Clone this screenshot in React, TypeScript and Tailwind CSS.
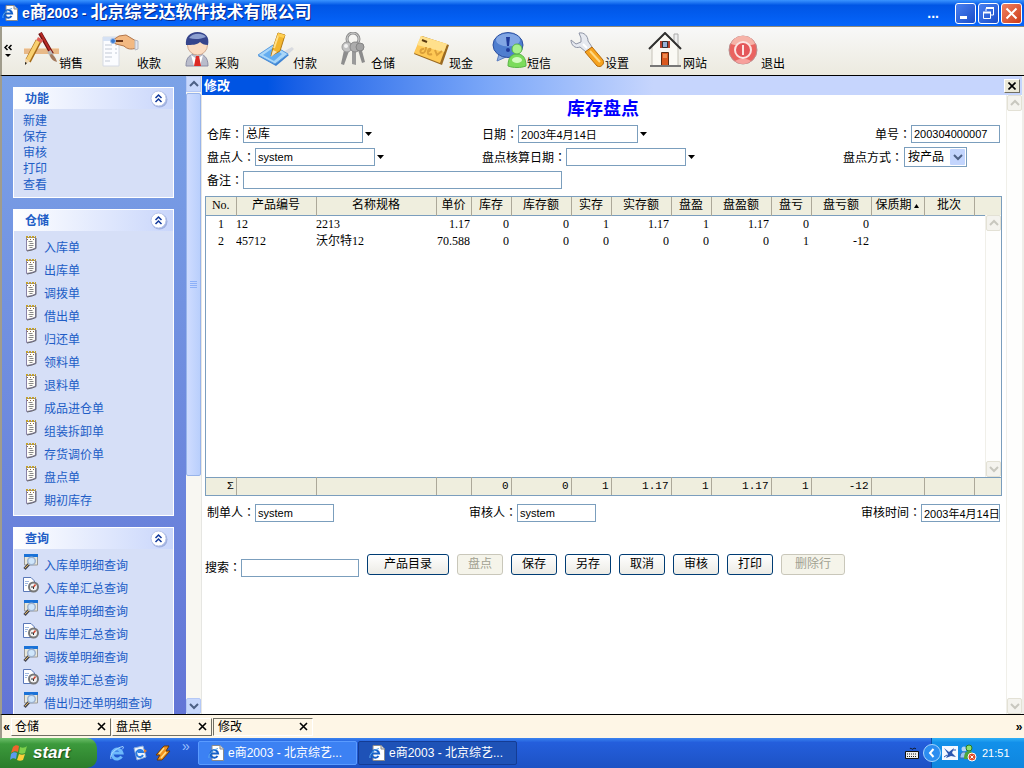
import type { ReactNode } from "react";

// ── data ────────────────────────────────────────────────────────
const functionLinks = ["新建", "保存", "审核", "打印", "查看"];

const storageLinks = [
  "入库单",
  "出库单",
  "调拨单",
  "借出单",
  "归还单",
  "领料单",
  "退料单",
  "成品进仓单",
  "组装拆卸单",
  "存货调价单",
  "盘点单",
  "期初库存",
];

const queryLinks = [
  "入库单明细查询",
  "入库单汇总查询",
  "出库单明细查询",
  "出库单汇总查询",
  "调拨单明细查询",
  "调拨单汇总查询",
  "借出归还单明细查询",
];

const columns = [
  { title: "No.", col: "w-[30px]" },
  { title: "产品编号", col: "w-[80px]" },
  { title: "名称规格", col: "w-[120px]" },
  { title: "单价", col: "w-[35px]" },
  { title: "库存", col: "w-[40px]" },
  { title: "库存额", col: "w-[60px]" },
  { title: "实存", col: "w-[40px]" },
  { title: "实存额", col: "w-[60px]" },
  { title: "盘盈", col: "w-[40px]" },
  { title: "盘盈额", col: "w-[60px]" },
  { title: "盘亏", col: "w-[40px]" },
  { title: "盘亏额", col: "w-[60px]" },
  { title: "保质期", col: "w-[53px]", sorted: true },
  { title: "批次", col: "w-[50px]" },
  { title: "", col: "" },
];

const rows = [
  ["1", "12", "2213", "1.17", "0", "0", "1", "1.17", "1", "1.17", "0", "0", "", "", ""],
  ["2", "45712", "沃尔特12", "70.588", "0", "0", "0", "0", "0", "0", "1", "-12", "", "", ""],
];

const totals = ["Σ", "", "", "", "0", "0", "1", "1.17", "1", "1.17", "1", "-12", "", "", ""];

const actions = [
  { label: "产品目录", width: "w-[82px]" },
  { label: "盘点", width: "w-[46px]", disabled: true },
  { label: "保存", width: "w-[46px]" },
  { label: "另存", width: "w-[46px]" },
  { label: "取消", width: "w-[46px]" },
  { label: "审核", width: "w-[46px]" },
  { label: "打印", width: "w-[46px]" },
  { label: "删除行", width: "w-[64px]", disabled: true },
];

const tabs = ["仓储", "盘点单", "修改"];

// ── small icons ─────────────────────────────────────────────────
function IePageIcon() {
  return (
    <svg width="16" height="16" viewBox="0 0 16 16" className="shrink-0">
      <path d="M4 .5h8l3.500 3.500v11.500H4z" fill="#fff" stroke="#8a8a8a" />
      <path d="M12 .5V4h3.500" fill="#ddd" stroke="#8a8a8a" />
      <path d="M9.500 11a3.800 3.800 0 1 1 .6-2.500H3.500" fill="none" stroke="#1560c8" strokeWidth="2" />
      <path d="M1 13C0 10 4 5 10 3.500" fill="none" stroke="#59a9f0" />
    </svg>
  );
}

function NoteIcon() {
  return (
    <svg width="16" height="16" viewBox="0 0 16 16" className="shrink-0">
      <path d="M3.500 1.500h9V12L9 13.500l-5.500 1z" fill="#fffef8" stroke="#8a83a8" />
      <path d="M13 2v10.500L9 14l-5 1" fill="none" stroke="#66666c" />
      <path d="M3 1h10" stroke="#c2a12c" strokeWidth="2" strokeDasharray="2 1" />
      <path d="M4 3.500h8" stroke="#8a6a4a" strokeDasharray="1 2" />
      <path d="M5.500 5.500h4M6.500 7.500h4M5.500 9.500h5M6.500 11.500h3" stroke="#888" />
    </svg>
  );
}

function DetailIcon() {
  return (
    <svg width="16" height="16" viewBox="0 0 16 16" className="shrink-0">
      <path d="M1.500 1h13v10h-13z" fill="#e9e8da" stroke="#9a9a98" />
      <path d="M1 1.500h14" stroke="#1a72d8" strokeWidth="3" />
      <path d="M6 10l-4.500 5" stroke="#4a4a55" strokeWidth="3" />
      <path d="M6 10l-4 4" stroke="#e0b458" />
      <circle cx="8.500" cy="7" r="3.800" fill="#cfe6fb" stroke="#9fb2cd" strokeWidth="1.500" />
    </svg>
  );
}

function SummaryIcon() {
  return (
    <svg width="16" height="16" viewBox="0 0 16 16" className="shrink-0">
      <path d="M.5.5H8l3.500 3.500v10.500H.5z" fill="#fff" stroke="#5a78b8" />
      <path d="M2 4.500h4M2 6.500h3M2 8.500h2" stroke="#9db7e0" />
      <circle cx="10.500" cy="10" r="4.500" fill="#f3f3f3" stroke="#777" strokeWidth="2" />
      <path d="M10.500 10l2-2.500" stroke="#d0452f" strokeWidth="1.500" />
      <path d="M8 10h2.500v2" stroke="#333" fill="none" />
    </svg>
  );
}

function CollapseIcon() {
  return (
    <svg width="18" height="18" viewBox="0 0 18 18">
      <circle cx="9.500" cy="9.500" r="8" fill="#9fb0df" />
      <circle cx="8.500" cy="8.500" r="7.500" fill="#fff" stroke="#b9c6ea" />
      <path d="M5.500 8L8.500 5l3 3M5.500 12L8.500 9l3 3" fill="none" stroke="#11399c" strokeWidth="1.500" />
    </svg>
  );
}

function DownTriangle() {
  return (
    <svg width="7" height="4" viewBox="0 0 7 4">
      <path d="M0 0h7L3.500 4z" fill="#000" />
    </svg>
  );
}

function Chevron({ up = false, color }: { up?: boolean; color: string }) {
  return (
    <svg width="10" height="8" viewBox="0 0 10 8">
      <path
        d={up ? "M1 6l4-4 4 4" : "M1 2l4 4 4-4"}
        fill="none"
        stroke={color}
        strokeWidth="2"
      />
    </svg>
  );
}

// ── toolbar icons ───────────────────────────────────────────────
function SalesIcon() {
  return (
    <svg width="35" height="35" viewBox="0 0 35 35">
      <path d="M0 16h35v6H0z" fill="#e8b988" />
      <path d="M0 16.500h35" stroke="#f3d6b4" />
      <path d="M16 1l12 21" stroke="#6a1010" strokeWidth="4" />
      <path d="M16.500 1l11 20" stroke="#b82a25" strokeWidth="2" />
      <path d="M25 19l3 5" stroke="#b5b5b5" strokeWidth="4" />
      <path d="M27 22c2 0 5 4 6 8-4-1-7-4-7-7z" fill="#a3795c" />
      <path d="M14.500 9L4 29" stroke="#a56a16" strokeWidth="6" />
      <path d="M14 9L4 28" stroke="#f8d070" strokeWidth="4" />
      <path d="M12.500 8l5 3 1.500-3-5-3z" fill="#e0605a" />
      <path d="M1 26l5 3-5 4z" fill="#f2d8ae" />
      <path d="M1 30l2 1-2 2z" fill="#222" />
    </svg>
  );
}

function ReceiptIcon() {
  return (
    <svg width="37" height="35" viewBox="0 0 37 35">
      <path d="M1 5h16v29H1z" fill="#fbfcff" stroke="#d5dae4" />
      <path d="M1 5h16v4H1z" fill="#d5e1f4" />
      <path d="M3 13h7M3 17h7M3 21h7M3 25h7M3 29h5M13 13h2M13 17h2M13 21h2" stroke="#c2c9d5" />
      <path d="M11 8l6-4 7-1 10 6v7c-5 2-9 1-12-2l-8-2-3-2z" fill="#f3b982" stroke="#b3764a" />
      <path d="M13 9l8 0" stroke="#6b3518" strokeWidth="2" />
      <path d="M33 8l3 1v8l-3 1z" fill="#e3e6ef" stroke="#b5b9c4" />
      <circle cx="11" cy="9" r="2.500" fill="#3c7bd0" stroke="#9fc0ee" />
    </svg>
  );
}

function BuyerIcon() {
  return (
    <svg width="35" height="35" viewBox="0 0 35 35">
      <path d="M6 34c0-9 4-12 11-12s11 3 11 12z" fill="#b9bccb" stroke="#8b8ea5" />
      <path d="M11 23l6 4 6-4-3 11h-6z" fill="#fff" />
      <path d="M16 24h3l2 10h-7z" fill="#dc2a25" />
      <circle cx="17.500" cy="13" r="10" fill="#fbdcc2" stroke="#d0aa92" />
      <path d="M6 13C5 5 10 0 17.500 0S30 5 28 13c-4 0-6-1-8-3-3 3-8 3-14 3z" fill="#36458c" />
      <path d="M9 6c3-5 13-6 17-1-5 2-11 3-17 1z" fill="#8c9fd0" />
    </svg>
  );
}

function PayIcon() {
  return (
    <svg width="36" height="35" viewBox="0 0 36 35">
      <path d="M23 21l11-6 2 2-10 9z" fill="#d9dbe0" />
      <path d="M0 24l15-11 16 10-13 11z" fill="#3c82d2" />
      <path d="M0 23l15-10 15 9-13 10z" fill="#a9d6f8" stroke="#5a9de0" />
      <path d="M5 23l10-7 9 6-8 7z" fill="#64adf0" />
      <path d="M13 24l2-8L20 1l7 2-5 16z" fill="#f3b62e" stroke="#b47a12" />
      <path d="M20 4l-4 12" stroke="#ffe08a" strokeWidth="2" />
      <path d="M13 25l2-7 4 2z" fill="#fbe4b8" />
      <path d="M20 1l7 2-1 3-7-2z" fill="#ffcf52" />
    </svg>
  );
}

function KeysIcon() {
  return (
    <svg width="35" height="35" viewBox="0 0 35 35">
      <circle cx="17" cy="7" r="6" fill="none" stroke="#8f8f8f" strokeWidth="3" />
      <circle cx="17" cy="7" r="6" fill="none" stroke="#d0d0d0" />
      <path d="M8 18L5 32l3 1 5-14z" fill="#8d8d8d" />
      <circle cx="11" cy="15" r="5" fill="#c2c2c2" stroke="#999" />
      <path d="M16 19v13l4 1V19z" fill="#9a9a9a" />
      <circle cx="19" cy="15" r="5" fill="#acacac" stroke="#888" />
      <path d="M22 18l4 13 3-1-4-15z" fill="#8c8c8c" />
      <circle cx="24" cy="15" r="4" fill="#a2a2a2" stroke="#858585" />
      <circle cx="10" cy="14" r="2" fill="#f2f2f2" />
    </svg>
  );
}

function CashIcon() {
  return (
    <svg width="36" height="35" viewBox="0 0 36 35">
      <path d="M8 4l27 9-7 20L0 22z" fill="#9a6a22" />
      <path d="M7 4l26 8-7 19L0 21z" fill="#ffc955" />
      <path d="M7 4l26 8-3 8L3 13z" fill="#ffe08c" />
      <path d="M8 8l5 2" stroke="#5b3a10" strokeWidth="2" />
      <path
        d="M10 17c-4-1-5 5-1 4 2 0 3-4 3-6M14 20c5-3 1-5 0-1-1 4 2 4 4 3M21 18l2 5 5-4"
        fill="none"
        stroke="#dca03a"
        strokeWidth="2"
      />
    </svg>
  );
}

function MessageIcon() {
  return (
    <svg width="35" height="36" viewBox="0 0 35 36">
      <path d="M7 22l-2 7 9-4z" fill="#8fb0e4" stroke="#5a7cc0" />
      <ellipse cx="16" cy="13" rx="15" ry="12.500" fill="#4f7ecf" stroke="#2c4f9f" />
      <ellipse cx="16" cy="8" rx="12" ry="6.500" fill="#82a6e4" />
      <path d="M14 5h4l-1 9h-2z" fill="#1f3a9a" />
      <circle cx="16" cy="18" r="2" fill="#1f3a9a" />
      <path d="M16 34c0-8 3-12 9-12s9 4 9 12c-5 2-13 2-18 0z" fill="#7bdc5b" stroke="#5cb548" />
      <circle cx="25" cy="17" r="5" fill="#a8f08c" stroke="#5cb548" />
      <ellipse cx="25" cy="28" rx="5" ry="3" fill="#d2fbc0" />
    </svg>
  );
}

function SettingsIcon() {
  return (
    <svg width="36" height="36" viewBox="0 0 36 36">
      <path
        d="M9 1c5-1 9 3 9 8l4 6-6 5-6-5C5 17 1 13 1 8l5 4 5-2V6z"
        fill="#e6e9f0"
        stroke="#8e94a5"
      />
      <path d="M15 20l7-5 11 13c2 4-2 8-6 6z" fill="#f6a31f" stroke="#b56a0c" />
      <path d="M20 19l10 11" stroke="#ffd983" strokeWidth="2" />
      <path d="M13 12l4 4" stroke="#fff" strokeWidth="2" />
    </svg>
  );
}

function HomeIcon() {
  return (
    <svg width="35" height="36" viewBox="0 0 35 36">
      <path d="M26 2h4v12h-4z" fill="#eee" stroke="#aaa" />
      <path d="M4 15L17 2l13 13v19H4z" fill="#faf9f4" stroke="#c5c2b8" />
      <path d="M1 17L17 1l16 16" fill="none" stroke="#30302f" strokeWidth="2" />
      <path d="M12 9h10v7H12z" fill="#b5412c" />
      <path d="M14.500 9.500h5v6h-5z" fill="#9ab2d8" stroke="#333" />
      <path d="M13.500 20.500h7V34h-7z" fill="#d9581f" stroke="#5a2a12" />
      <path d="M15 22h4v4h-4z" fill="#ee8a4e" />
      <path d="M2 34h31" stroke="#777" strokeWidth="2" />
    </svg>
  );
}

function ExitIcon() {
  return (
    <svg width="35" height="36" viewBox="0 0 35 36">
      <circle cx="17" cy="18" r="14" fill="#ea6460" stroke="#b98f8f" />
      <path d="M5 12c4-11 20-11 24 0-6 2-18 2-24 0z" fill="#f6b3a8" />
      <path d="M9 29c5 4 11 4 16 0-5-3-11-3-16 0z" fill="#f7a09c" />
      <circle cx="17" cy="18" r="8" fill="#e4575a" stroke="#fbe4e2" strokeWidth="2" />
      <path d="M17 13v10" stroke="#fbe4e2" strokeWidth="2" />
    </svg>
  );
}

const tools = [
  { label: "销售", icon: <SalesIcon /> },
  { label: "收款", icon: <ReceiptIcon /> },
  { label: "采购", icon: <BuyerIcon /> },
  { label: "付款", icon: <PayIcon /> },
  { label: "仓储", icon: <KeysIcon /> },
  { label: "现金", icon: <CashIcon /> },
  { label: "短信", icon: <MessageIcon /> },
  { label: "设置", icon: <SettingsIcon /> },
  { label: "网站", icon: <HomeIcon /> },
  { label: "退出", icon: <ExitIcon /> },
];

// ── building blocks ─────────────────────────────────────────────
function Panel({ title, children }: { title: string; children: ReactNode }) {
  return (
    <section className="shrink-0 border border-white bg-[#d6dff7]">
      <h2 className="flex h-[21px] items-center justify-between bg-linear-to-r from-white to-[#c9d6fb] pr-[5px] pl-[11px] font-bold">
        {title}
        <button type="button" aria-label={`收起${title}`}>
          <CollapseIcon />
        </button>
      </h2>
      {children}
    </section>
  );
}

function IconLinks({ items, icon }: { items: string[]; icon: (i: number) => ReactNode }) {
  return (
    <ul className="pt-[5px] pb-[3px] pl-[9px]">
      {items.map((item, i) => (
        <li key={item} className="flex h-[23px] items-start gap-[5px]">
          {icon(i)}
          <a href="#" className="leading-[25px] whitespace-nowrap">
            {item}
          </a>
        </li>
      ))}
    </ul>
  );
}

function Field({
  id,
  label,
  value = "",
  width,
  size = "text-[11px]",
  picker = false,
}: {
  id: string;
  label: string;
  value?: string;
  width: string;
  size?: string;
  picker?: boolean;
}) {
  return (
    <div className="flex items-center">
      <label htmlFor={id} className="whitespace-nowrap">
        {label}
        <span className="font-['Noto_Sans_CJK_TC']" lang="zh-TW">
          ：
        </span>
      </label>
      <input
        id={id}
        type="text"
        defaultValue={value}
        className={`h-[18px] border border-[#7b9ebd] bg-white pl-[2px] outline-none ${width} ${size}`}
      />
      {picker && (
        <button type="button" aria-label={`选择${label}`} className="pl-[2px]">
          <DownTriangle />
        </button>
      )}
    </div>
  );
}

function GrayScrollbar() {
  return (
    <div className="flex h-full w-4 flex-col justify-between border-l border-[#f0efe9] bg-[#fefefd]">
      <button
        type="button"
        aria-label="向上滚动"
        className="flex h-4 items-center justify-center rounded-[2px] border border-[#e3e1d5] bg-[#f4f3ee]"
      >
        <Chevron up color="#c8c7bf" />
      </button>
      <button
        type="button"
        aria-label="向下滚动"
        className="flex h-4 items-center justify-center rounded-[2px] border border-[#e3e1d5] bg-[#f4f3ee]"
      >
        <Chevron color="#c8c7bf" />
      </button>
    </div>
  );
}

function cellAlign(i: number) {
  if (i === 0) return "text-center";
  if (i < 3) return "text-left";
  return i === 3 ? "pr-px text-right" : "pr-[2px] text-right";
}

// ── window parts ────────────────────────────────────────────────
function TitleBar() {
  return (
    <header className="flex h-[26px] shrink-0 items-center bg-linear-to-b from-[#3a93ff] via-[#0055e5] via-20% to-[#0665fb] pr-[2px] pl-[2px] text-white">
      <IePageIcon />
      <h1 className="ml-1 flex-1 text-[17px] leading-[26px] font-bold whitespace-nowrap [text-shadow:1px_1px_#0a2a8a]">
        <span className="text-[14px]">e</span>商<span className="text-[14px]">2003 - </span>
        北京综艺达软件技术有限公司
      </h1>
      <span className="mr-4 text-sm font-bold">...</span>
      <div className="flex gap-[2px]">
        <button
          type="button"
          aria-label="最小化"
          className="h-[21px] w-[21px] rounded-[3px] border border-white bg-linear-to-br from-[#4a80f0] to-[#1a4cc8]"
        >
          <svg width="19" height="19" viewBox="0 0 19 19">
            <path d="M4 12h7v3H4z" fill="#fff" />
          </svg>
        </button>
        <button
          type="button"
          aria-label="还原"
          className="h-[21px] w-[21px] rounded-[3px] border border-white bg-linear-to-br from-[#4a80f0] to-[#1a4cc8]"
        >
          <svg width="19" height="19" viewBox="0 0 19 19" fill="none" stroke="#fff">
            <path d="M7 7V4.500h7.500V11H12" />
            <path d="M7 4h8" strokeWidth="2" />
            <path d="M4.500 8.500h7v6h-7z" />
            <path d="M4 8.500h8" strokeWidth="2" />
          </svg>
        </button>
        <button
          type="button"
          aria-label="关闭"
          className="h-[21px] w-[21px] rounded-[3px] border border-white bg-linear-to-br from-[#f08060] to-[#cc3a14]"
        >
          <svg width="19" height="19" viewBox="0 0 19 19">
            <path d="M4.500 4.500l10 10M14.500 4.500l-10 10" stroke="#fff" strokeWidth="2" />
          </svg>
        </button>
      </div>
    </header>
  );
}

function Toolbar() {
  return (
    <nav className="flex h-[50px] shrink-0 items-center border-t border-b border-l-2 border-t-[#8d8a7c] border-b-black border-l-[#a09c8c] bg-linear-to-b from-[#f8f8f8] to-[#eceadf] pl-[2px]">
      <button type="button" aria-label="更多" className="mr-3 w-2">
        <svg width="8" height="14" viewBox="0 0 8 14">
          <path d="M3.500 1L1 3.500 3.500 6M7.500 1L5 3.500 7.500 6" fill="none" stroke="#000" strokeWidth="1.500" />
          <path d="M1 10h6l-3 3z" fill="#000" />
        </svg>
      </button>
      <ul className="flex">
        {tools.map((tool) => (
          <li key={tool.label} className="w-[78px]">
            <a href="#" className="flex h-[39px] items-start">
              <span className="w-[35px]">{tool.icon}</span>
              <span className="self-end leading-[14px] whitespace-nowrap">{tool.label}</span>
            </a>
          </li>
        ))}
      </ul>
    </nav>
  );
}

function Sidebar() {
  return (
    <aside className="flex shrink-0 overflow-hidden border-l-2 border-[#a09c8c]">
      <div className="flex w-[184px] flex-col gap-[11px] overflow-hidden bg-linear-to-b from-[#7ba2e7] to-[#6375d6] py-[11px] pr-3 pl-[11px] text-[#215dc6]">
        <Panel title="功能">
          <ul className="px-[9px] py-1">
            {functionLinks.map((item) => (
              <li key={item} className="leading-4">
                <a href="#">{item}</a>
              </li>
            ))}
          </ul>
        </Panel>
        <Panel title="仓储">
          <IconLinks items={storageLinks} icon={() => <NoteIcon />} />
        </Panel>
        <Panel title="查询">
          <IconLinks
            items={queryLinks}
            icon={(i) => (i % 2 === 0 ? <DetailIcon /> : <SummaryIcon />)}
          />
        </Panel>
      </div>
      <div className="flex w-4 flex-col border-r border-[#e6e6e2] bg-[#f8f7f2]">
        <button
          type="button"
          aria-label="向上滚动"
          className="flex h-4 shrink-0 items-center justify-center border border-[#b4c8f6] bg-[#c8d8fc]"
        >
          <Chevron up color="#4d6185" />
        </button>
        <div className="mt-px flex h-[383px] flex-col items-center justify-center gap-px rounded-[2px] border border-[#98b4ea] bg-linear-to-r from-[#cfdcff] to-[#b9cffc]">
          {[0, 1, 2, 3].map((n) => (
            <span key={n} className="h-px w-[7px] bg-[#8cb0f8]" />
          ))}
        </div>
        <button
          type="button"
          aria-label="向下滚动"
          className="mt-auto flex h-4 shrink-0 items-center justify-center rounded-[2px] border border-[#b4c8f6] bg-[#c8d8fc]"
        >
          <Chevron color="#4d6185" />
        </button>
      </div>
    </aside>
  );
}

function StockTable() {
  return (
    <div className="relative mt-[7px] -ml-[2px] h-[300px] border border-[#7b9ebd]">
      <table className="h-full w-full table-fixed border-collapse">
        <colgroup>
          {columns.map((column, i) => (
            <col key={i} className={column.col} />
          ))}
        </colgroup>
        <thead>
          <tr className="h-[18px] border-b border-[#7b9ebd] bg-[#efeede]">
            {columns.map((column, i) => (
              <th
                key={i}
                className="h-[18px] overflow-hidden border-r border-[#aca899] p-0 leading-[17px] font-normal whitespace-nowrap last:border-r-0"
              >
                {i === 0 ? (
                  <span className="font-['Liberation_Serif']">{column.title}</span>
                ) : (
                  column.title
                )}
                {column.sorted && (
                  <svg width="7" height="4" viewBox="0 0 7 4" className="ml-px inline-block align-middle">
                    <path d="M1 4h5L3.500 0z" fill="#000" />
                  </svg>
                )}
              </th>
            ))}
          </tr>
        </thead>
        <tbody className="font-['Liberation_Serif','Noto_Sans_CJK_SC',serif]">
          {rows.map((row) => (
            <tr key={row[0]} className="h-[17px]">
              {row.map((cell, i) => (
                <td
                  key={i}
                  className={`h-[17px] overflow-hidden py-0 leading-[17px] whitespace-nowrap ${cellAlign(i)}`}
                >
                  {cell}
                </td>
              ))}
            </tr>
          ))}
          <tr>
            <td colSpan={columns.length} />
          </tr>
        </tbody>
        <tfoot className="font-['Liberation_Mono','Noto_Sans_CJK_SC',monospace] text-[11px]">
          <tr className="h-[18px] border-t border-[#7b9ebd] bg-[#efeede]">
            {totals.map((cell, i) => (
              <td
                key={i}
                className="h-[18px] border-r border-[#aca899] py-0 pr-[2px] text-right leading-[17px] last:border-r-0"
              >
                {cell}
              </td>
            ))}
          </tr>
        </tfoot>
      </table>
      <div className="absolute top-[18px] right-0 bottom-[18px]">
        <GrayScrollbar />
      </div>
    </div>
  );
}

function StockForm() {
  return (
    <form className="min-w-0 flex-1 overflow-hidden pr-[4px] pl-[5px]">
      <h2 className="mb-[2px] pr-[3px] text-center text-[18px] leading-[28px] font-bold text-[#0000ff]">
        库存盘点
      </h2>

      <div className="grid auto-rows-[18px] grid-cols-[275px_1fr_157px] items-center gap-y-[5px] pr-[2px]">
        <Field id="warehouse" label="仓库" value="总库" width="w-[120px]" size="text-[12px]" picker />
        <Field id="date" label="日期" value="2003年4月14日" width="w-[120px]" picker />
        <div className="justify-self-end">
          <Field id="number" label="单号" value="200304000007" width="w-[89px]" />
        </div>
        <Field id="counter" label="盘点人" value="system" width="w-[120px]" picker />
        <Field id="account-date" label="盘点核算日期" width="w-[120px]" picker />
        <div className="flex items-center">
          <label htmlFor="mode" className="whitespace-nowrap">
            盘点方式
            <span className="font-['Noto_Sans_CJK_TC']" lang="zh-TW">
              ：
            </span>
          </label>
          <div className="relative ml-px">
            <select
              id="mode"
              className="block h-5 w-[63px] appearance-none border border-[#7b9ebd] bg-white pl-[3px] outline-none"
            >
              <option>按产品</option>
            </select>
            <span className="pointer-events-none absolute top-[2px] right-[2px] flex h-4 w-[15px] items-center justify-center rounded-[1px] bg-[#c3d5fd]">
              <Chevron color="#4d6185" />
            </span>
          </div>
        </div>
        <div className="col-span-3">
          <Field id="remark" label="备注" width="w-[319px]" />
        </div>
      </div>

      <StockTable />

      <div className="mt-[7px] grid h-[18px] grid-cols-[262px_1fr_auto] items-center pr-[2px]">
        <Field id="maker" label="制单人" value="system" width="w-[79px]" />
        <Field id="auditor" label="审核人" value="system" width="w-[79px]" />
        <Field id="audit-time" label="审核时间" value="2003年4月14日" width="w-[79px]" />
      </div>

      <div className="mt-[33px] -ml-[2px] flex items-start gap-2">
        <div className="pt-1">
          <Field id="search" label="搜索" width="w-[118px]" />
        </div>
        {actions.map((action) => (
          <button
            key={action.label}
            type="button"
            disabled={action.disabled}
            className={`h-[21px] rounded-[3px] border border-[#003c74] bg-linear-to-b from-white to-[#ecebe5] leading-[17px] disabled:border-[#c9c7ba] disabled:from-[#f5f4ea] disabled:to-[#f5f4ea] disabled:text-[#a1a192] ${action.width}`}
          >
            {action.label}
          </button>
        ))}
      </div>
    </form>
  );
}

function TabStrip() {
  return (
    <nav className="flex h-6 shrink-0 items-center border-t border-l-2 border-t-black border-l-[#a09c8c] bg-[#fef6e6]">
      <button type="button" aria-label="上一页" className="w-[9px] font-bold leading-4">
        «
      </button>
      {tabs.map((tab, i) => (
        <div
          key={tab}
          className={
            i === tabs.length - 1
              ? "mr-px flex h-[18px] w-[100px] items-center justify-between border border-t-[#716f64] border-r-white border-b-white border-l-[#716f64] pr-1 pl-1"
              : "mr-px flex h-[18px] w-[100px] items-center justify-between border border-t-white border-r-[#716f64] border-b-[#716f64] border-l-white pr-1 pl-[3px]"
          }
        >
          <a href="#" className="leading-4">
            {tab}
          </a>
          <button type="button" aria-label={`关闭${tab}`}>
            <svg width="9" height="9" viewBox="0 0 9 9">
              <path d="M1 1l7 7M8 1L1 8" stroke="#000" strokeWidth="1.600" />
            </svg>
          </button>
        </div>
      ))}
      <button type="button" aria-label="下一页" className="ml-auto w-[10px] font-bold leading-4">
        »
      </button>
    </nav>
  );
}

function Taskbar() {
  return (
    <footer className="flex h-[30px] shrink-0 items-stretch bg-linear-to-b from-[#3a83f0] via-[#245edc] via-15% to-[#1d52c4] text-white">
      <button
        type="button"
        className="flex w-[97px] items-center gap-[5px] rounded-r-[10px] bg-linear-to-b from-[#6cbf6a] via-[#3c9a3c] via-20% to-[#2b7d2b] pl-[10px] text-[17px] font-bold italic [text-shadow:1px_1px_1px_#1b4d1b]"
      >
        <svg width="18" height="18" viewBox="0 0 18 18">
          <path d="M3 3c2-2 4-2 6-1L8 8C6 7 4 7 1 9z" fill="#f0642d" />
          <path d="M10 3c2 1 5 1 7-1l-2 7c-2 1-4 1-6 0z" fill="#7ed04b" />
          <path d="M1 10c2-2 4-2 6-1l-1 6c-2-1-4-1-6 1z" fill="#5b9bf0" />
          <path d="M9 10c2 1 4 1 6 0l-2 6c-2 1-4 1-6 0z" fill="#fbcf3a" />
        </svg>
        start
      </button>

      {/* quick launch */}
      <div className="flex w-[101px] items-center gap-[7px] pl-3">
        <svg width="16" height="16" viewBox="0 0 16 16" fill="none">
          <path d="M12.500 11.500A5 5 0 1 1 13 8H4" stroke="#6db9fb" strokeWidth="3" />
          <path d="M2 14C0 10 6 3 14 1.500c1 1 0 2-1 3" stroke="#a8d6ff" />
        </svg>
        <svg width="16" height="16" viewBox="0 0 16 16">
          <path d="M2 3l9-2 3 11-9 3z" fill="#eef4fd" stroke="#8fb0dd" />
          <path d="M11 10a3.500 3.500 0 1 1 0-3H6" fill="none" stroke="#2b7de0" strokeWidth="2" />
          <path d="M12 4l3 2-3 2z" fill="#e8862f" />
        </svg>
        <svg width="16" height="16" viewBox="0 0 16 16">
          <path d="M9 1h5l-3 5h4l-8 9H2l3-5H1z" fill="#f4941d" stroke="#6b3a08" />
          <path d="M9 3L4 9M11 7l-5 6" stroke="#ffe08a" strokeWidth="1.500" />
        </svg>
        <span className="ml-1 self-start text-sm leading-4 text-[#9cc0ff]">»</span>
      </div>

      <button
        type="button"
        className="my-[3px] flex w-[159px] items-center gap-1 rounded-[2px] border border-[#5a9bff] bg-[#3c81f3] pl-[9px] leading-4"
      >
        <IePageIcon />
        e商2003 - 北京综艺...
      </button>
      <button
        type="button"
        className="my-[3px] ml-px flex w-[159px] items-center gap-1 rounded-[2px] border border-[#143c94] bg-[#1e52b7] pl-[10px] leading-4"
      >
        <IePageIcon />
        e商2003 - 北京综艺...
      </button>

      {/* tray */}
      <div className="ml-auto flex items-center">
        <svg width="14" height="14" viewBox="0 0 14 14" className="mr-3">
          <path d="M.5 5.500h13v7H.5z" fill="#eee" stroke="#111" />
          <path d="M2 8h10M2 10.500h10" stroke="#222" strokeDasharray="1 1" />
          <path d="M5 3c1-2 2 1 3 0s2-1 3 0" fill="none" stroke="#111" />
        </svg>
        <div className="flex h-full w-[93px] items-center border-l border-[#0a4fa8] bg-linear-to-b from-[#2fb0f6] via-[#1290ea] via-15% to-[#0f86de]">
          <button type="button" aria-label="显示隐藏图标" className="-ml-[9px]">
            <svg width="18" height="18" viewBox="0 0 18 18">
              <circle cx="9" cy="9" r="8.500" fill="#2b8df0" stroke="#a8d5fb" />
              <path d="M10.500 5L7 9l3.500 4" fill="none" stroke="#fff" strokeWidth="2" />
            </svg>
          </button>
          <svg width="16" height="16" viewBox="0 0 16 16" className="ml-px">
            <path d="M0 1h16v14H0z" fill="#f4f8ff" />
            <path d="M2 3l5 4 5-4-2 5 4 4-5-1-5 2 2-4z" fill="#2a55b0" />
            <path d="M2 12l3-2M11 5h3" stroke="#2a55b0" />
          </svg>
          <svg width="18" height="18" viewBox="0 0 18 18" className="ml-px">
            <circle cx="5" cy="5" r="2.500" fill="#b5d5f5" />
            <path d="M1 14c0-5 2-6 4-6s4 2 4 6z" fill="#9fc4ee" stroke="#3a6ab0" />
            <circle cx="10" cy="4" r="3" fill="#8fe070" stroke="#2c7a22" />
            <path d="M5 15c0-6 2-8 5-8s5 3 5 8z" fill="#4da53c" />
            <circle cx="13" cy="13" r="4" fill="#e04a28" stroke="#fff" />
            <path d="M11.500 11.500l3 3M14.500 11.500l-3 3" stroke="#fff" />
          </svg>
          <time className="ml-[5px] text-[11px]">21:51</time>
        </div>
      </div>
    </footer>
  );
}

export default function App() {
  return (
    <div className="flex h-screen flex-col overflow-hidden bg-white font-['Liberation_Sans','Noto_Sans_CJK_SC',sans-serif] text-[12px] text-black">
      <TitleBar />
      <Toolbar />
      <div className="flex min-h-0 flex-1">
        <Sidebar />
        <main className="flex min-w-0 flex-1 flex-col border-r-2 border-[#f0eeea]">
          <div className="flex h-[19px] shrink-0 items-center justify-between bg-linear-to-r from-[#0054e3] from-8% via-[#7ba7f8] via-35% to-[#c6d5fd] to-55% pr-[2px] pl-[2px]">
            <h2 className="text-[13px] leading-4 font-bold text-white">修改</h2>
            <button
              type="button"
              aria-label="关闭"
              className="flex h-[14px] w-4 items-center justify-center border border-t-white border-r-[#716f64] border-b-[#716f64] border-l-white bg-[#ece9d8]"
            >
              <svg width="8" height="8" viewBox="0 0 8 8">
                <path d="M.5.5l7 7M7.500.5l-7 7" stroke="#000" strokeWidth="1.600" />
              </svg>
            </button>
          </div>
          <div className="flex min-h-0 flex-1">
            <StockForm />
            <GrayScrollbar />
          </div>
        </main>
      </div>
      <TabStrip />
      <Taskbar />
    </div>
  );
}
